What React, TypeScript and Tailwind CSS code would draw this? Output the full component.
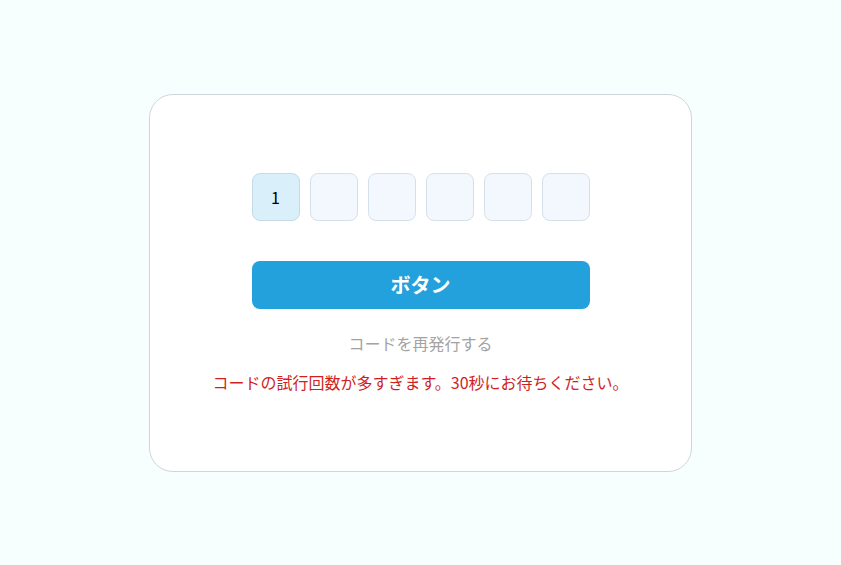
const cells = ["1", "", "", "", "", ""];

export default function App() {
  return (
    <div
      className="flex min-h-[565px] items-center justify-center bg-[#f7fffe]"
      style={{ fontFamily: '"Noto Sans CJK JP", "Noto Sans", sans-serif' }}
    >
      <div className="flex w-[543px] flex-col items-center rounded-3xl border border-[#d1d5db] bg-white px-[101px] pt-[78px] pb-[77px]">
        <div className="flex gap-[10px]">
          {cells.map((v, i) => (
            <div
              key={i}
              className={`flex h-12 w-12 items-center justify-center rounded-lg border text-base text-black ${
                v ? "border-[#c5dbe6] bg-[#d9effa]" : "border-[#d5e1ea] bg-[#f2f8fd]"
              }`}
            >
              {v}
            </div>
          ))}
        </div>
        <button className="mt-10 h-12 w-[338px] rounded-lg bg-[#22a1dc] text-xl font-bold text-white">
          ボタン
        </button>
        <p className="mt-[22px] text-base leading-6 text-[#a3a3a3]">コードを再発行する</p>
        <p className="mt-[15px] whitespace-nowrap text-base leading-6 text-[#d01f1f]">
          コードの試行回数が多すぎます。30秒にお待ちください。
        </p>
      </div>
    </div>
  );
}
